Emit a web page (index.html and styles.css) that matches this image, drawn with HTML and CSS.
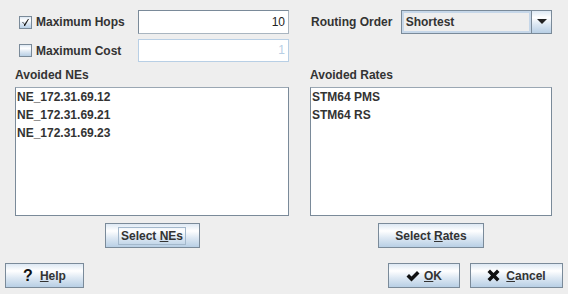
FILE: index.html
```html
<!DOCTYPE html>
<html>
<head>
    <title>Routing Constraints</title>
    <link rel="stylesheet" href="styles.css">
</head>
<body>
    <div class="dialog">
        <div class="main">
            <div class="col">
                <div class="row">
                    <label class="check">
                        <span class="box">
                            <svg width="11" height="11" viewBox="0 0 11 11"><path d="M2 5 L4 7 L4 9 L5 9 L9 2 L8 2 L4.5 7 L3 5 Z" fill="#222"/></svg>
                        </span>
                        <span>Maximum Hops</span>
                    </label>
                    <div class="field">10</div>
                </div>
                <div class="row second">
                    <label class="check">
                        <span class="box"></span>
                        <span>Maximum Cost</span>
                    </label>
                    <div class="field disabled">1</div>
                </div>
            </div>
            <div class="col">
                <div class="row">
                    <span class="combo-label">Routing Order</span>
                    <div class="combo">
                        <div class="combo-value">Shortest</div>
                        <div class="combo-arrow">
                            <svg width="10" height="6" viewBox="0 0 10 6"><path d="M0 0 H10 L5 5 Z" fill="#222"/></svg>
                        </div>
                    </div>
                </div>
            </div>

            <div class="group-label">Avoided NEs</div>
            <div class="group-label">Avoided Rates</div>

            <div class="list">
                <div class="item">NE_172.31.69.12</div>
                <div class="item">NE_172.31.69.21</div>
                <div class="item">NE_172.31.69.23</div>
            </div>
            <div class="list">
                <div class="item">STM64 PMS</div>
                <div class="item">STM64 RS</div>
            </div>

            <div class="btn-row">
                <button class="btn select-nes"><span class="focus">Select <u>N</u>Es</span></button>
            </div>
            <div class="btn-row">
                <button class="btn select-rates"><span>Select <u>R</u>ates</span></button>
            </div>
        </div>

        <div class="footer">
            <button class="btn help"><span class="qmark">?</span><span><u>H</u>elp</span></button>
            <div class="spacer"></div>
            <button class="btn ok">
                <svg width="14" height="12" viewBox="0 0 14 12"><path d="M0.5 6.5 L3 4 L5.5 6.5 L11 1 L13.5 3.5 L5.5 11.5 Z" fill="#111"/></svg>
                <span><u>O</u>K</span>
            </button>
            <button class="btn cancel">
                <svg width="13" height="13" viewBox="0 0 13 13"><path d="M0.5 3 L3 0.5 L6.5 4 L10 0.5 L12.5 3 L9 6.5 L12.5 10 L10 12.5 L6.5 9 L3 12.5 L0.5 10 L4 6.5 Z" fill="#111"/></svg>
                <span><u>C</u>ancel</span>
            </button>
        </div>
    </div>
</body>
</html>
```

FILE: styles.css
```css
body {
    margin: 0;
    background-color: #eeeeee;
    font-family: "Liberation Sans", Arial, sans-serif;
    font-size: 12px;
    font-weight: bold;
    color: #333333;
}

.main {
    display: grid;
    grid-template-columns: 274px 242px;
    column-gap: 21px;
    padding: 10px 0 0 15px;
}

.row {
    display: flex;
    align-items: center;
    height: 24px;
}

.row.second {
    margin-top: 5px;
    height: 23px;
}

.check {
    display: flex;
    align-items: center;
    width: 123px;
    padding-left: 4px;
    box-sizing: border-box;
}

.box {
    width: 11px;
    height: 11px;
    border: 1px solid #7a8a99;
    background: linear-gradient(#dde8f3 0%, #ffffff 30%, #dde8f3 60%, #b8cfe5 100%);
    margin-right: 4px;
    display: flex;
}

.field {
    width: 151px;
    height: 100%;
    box-sizing: border-box;
    border: 1px solid #7a8a99;
    border-right-color: #a9b5c0;
    border-bottom-color: #a9b5c0;
    background-color: #ffffff;
    font-weight: normal;
    text-align: right;
    padding-right: 3px;
    line-height: 22px;
    color: #222222;
}

.field.disabled {
    border-color: #b8cfe5;
    color: #b8cfe5;
    line-height: 21px;
}

.combo-label {
    width: 90px;
    padding-left: 1px;
}

.combo {
    display: flex;
    width: 152px;
    height: 24px;
    box-sizing: border-box;
    border: 1px solid #7a8a99;
}

.combo-value {
    flex: 1;
    background-color: #eeeeee;
    box-shadow: inset 0 0 0 2px #c6d7e9;
    padding-left: 4px;
    line-height: 22px;
}

.combo-arrow {
    width: 19px;
    border-left: 1px solid #7a8a99;
    background: linear-gradient(#dde8f3 0%, #ffffff 30%, #dde8f3 60%, #b8cfe5 100%);
    display: flex;
    align-items: center;
    justify-content: center;
}

.group-label {
    margin-top: 6px;
    height: 14px;
    line-height: 14px;
}

.list {
    margin-top: 5px;
    height: 129px;
    box-sizing: border-box;
    border: 1px solid #7a8a99;
    border-top-color: #9aa7b3;
    background-color: #ffffff;
    padding-left: 1px;
}

.item {
    height: 18px;
    line-height: 18px;
}

.btn-row {
    display: flex;
    justify-content: center;
    margin-top: 7px;
}

.btn {
    height: 25px;
    border: 1px solid #7a8a99;
    background: linear-gradient(#dde8f3 0%, #ffffff 30%, #dde8f3 60%, #b8cfe5 100%);
    font-family: "Liberation Sans", Arial, sans-serif;
    font-size: 12px;
    font-weight: bold;
    color: #333333;
    display: flex;
    align-items: center;
    justify-content: center;
    padding: 0;
    gap: 4px;
}

.select-nes {
    width: 95px;
}

.select-rates {
    width: 106px;
}

.focus {
    border: 1px solid #a3b8cc;
    padding: 1px 2px;
}

.footer {
    display: flex;
    padding: 15px 5px 0 5px;
}

.spacer {
    flex: 1;
}

.help {
    width: 79px;
    gap: 7px;
}

.qmark {
    font-size: 16px;
    color: #111111;
}

.ok {
    width: 72px;
    margin-right: 10px;
}

.cancel {
    width: 93px;
    gap: 6px;
}
```
